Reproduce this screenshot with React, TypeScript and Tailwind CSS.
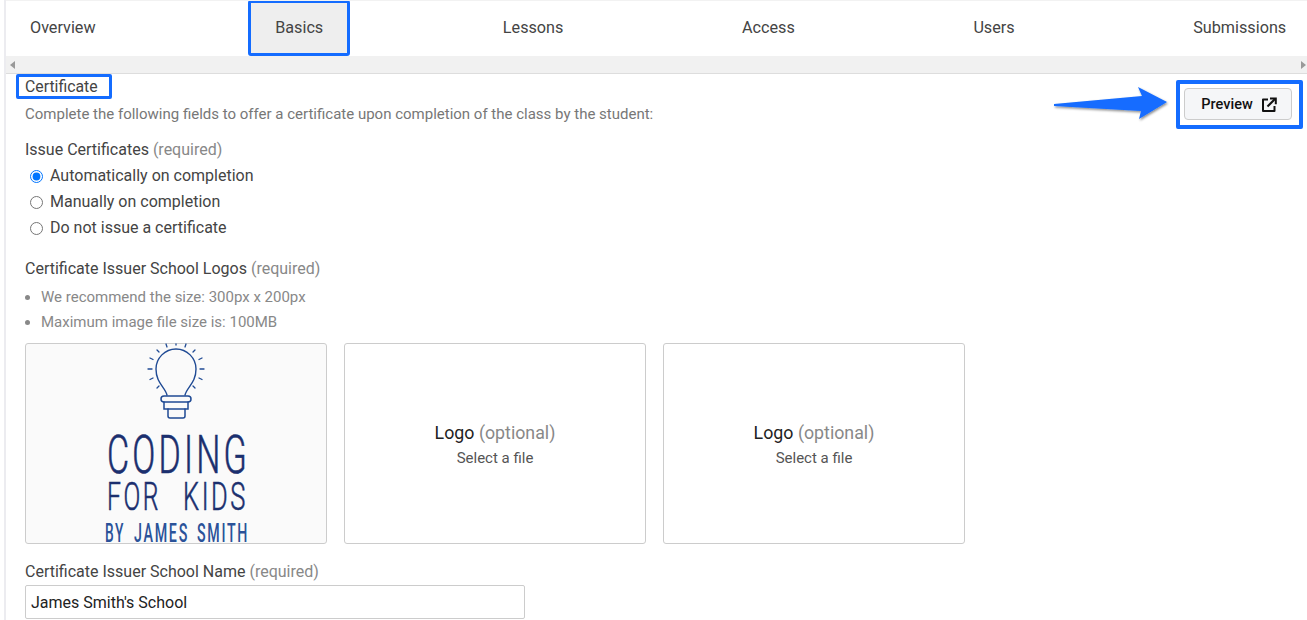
const tabs = ["Overview", "Basics", "Lessons", "Access", "Users", "Submissions"];

const issueOptions = [
  { label: "Automatically on completion", checked: true },
  { label: "Manually on completion", checked: false },
  { label: "Do not issue a certificate", checked: false },
];

const rays = [
  "M150 0 L150 1",
  "M140 0 L141 3",
  "M160 0 L159 3",
  "M131 6 L133 8",
  "M169 6 L167 8",
  "M124 14 L127 15.5",
  "M176 14 L173 15.5",
  "M122 25 L126 25",
  "M178 25 L174 25",
  "M124 35.5 L127 34",
  "M176 35.5 L173 34",
  "M131 44 L133 42",
  "M169 44 L167 42",
];

const LogoArt = () => (
  <svg viewBox="0 0 300 200" className="h-[200px] w-[300px] overflow-visible">
    <g fill="none" stroke="#1f4a94" strokeLinecap="round">
      {rays.map((d) => (
        <path key={d} d={d} strokeWidth="1.3" />
      ))}
      <path
        d="M141 51 C139 43 130 39 130 25 C130 14 139 5 150 5 C161 5 170 14 170 25 C170 39 161 43 159 51"
        strokeWidth="1.4"
      />
      <rect x="135" y="52" width="30" height="6" rx="3" strokeWidth="1.5" />
      <path d="M138 58 L138 65 L162 65 L162 58" strokeWidth="1.5" />
      <path d="M142 65 L142 72 Q142 74 144 74 L157 74 Q159 74 159 72 L159 65" strokeWidth="1.5" />
    </g>
    <g fontFamily="Roboto, sans-serif" fontWeight="300" fill="#1b2f6e" stroke="#1b2f6e" strokeWidth="0.6">
      <text x="81" y="129" fontSize="53" letterSpacing="5" textLength="143" lengthAdjust="spacingAndGlyphs">
        CODING
      </text>
      <text x="81" y="166" fontSize="39" letterSpacing="4" textLength="54" lengthAdjust="spacingAndGlyphs">
        FOR
      </text>
      <text x="157" y="166" fontSize="39" letterSpacing="4" textLength="65" lengthAdjust="spacingAndGlyphs">
        KIDS
      </text>
    </g>
    <g fontFamily="Roboto, sans-serif" fontWeight="500" fontSize="25" letterSpacing="3" fill="#2a5299">
      <text x="79" y="198" textLength="20" lengthAdjust="spacingAndGlyphs">
        BY
      </text>
      <text x="108" y="198" textLength="55" lengthAdjust="spacingAndGlyphs">
        JAMES
      </text>
      <text x="171" y="198" textLength="52" lengthAdjust="spacingAndGlyphs">
        SMITH
      </text>
    </g>
  </svg>
);

const LaunchIcon = () => (
  <svg viewBox="0 0 16 16" className="h-[16px] w-[16px]" fill="none" stroke="#111" strokeWidth="2">
    <path d="M7 2.5 H2 V14 H13.5 V9" strokeLinejoin="round" />
    <path d="M6.5 9.5 L14 2" />
    <path d="M9 1.6 H14.8 V7.2" />
  </svg>
);

const LogoSlot = () => (
  <div className="flex h-[201px] w-[302px] flex-col items-center justify-center rounded-[3px] border border-[#ccc] bg-white pt-[2px]">
    <div className="text-[17.8px] leading-[26px] text-[#222]">
      Logo <span className="text-[#888]">(optional)</span>
    </div>
    <div className="text-[15px] leading-[24px] text-[#555]">Select a file</div>
  </div>
);

const Required = () => <span className="text-[#888]"> (required)</span>;

export default function App() {
  return (
    <div className="h-[620px] w-[1307px] overflow-hidden bg-white font-['Roboto',sans-serif] text-[#444]">
      <div className="ml-[4px] h-full border-l-2 border-[#ececf0]">
        <div className="flex h-[56px] gap-[130.6px] overflow-hidden border-t border-[#f2f2f2]">
          {tabs.map((tab) =>
            tab === "Basics" ? (
              <div
                key={tab}
                className="-ml-[2px] -mt-px mb-px mr-[-2px] flex h-[56px] shrink-0 items-center rounded-[3px] border-[3px] border-[#146cff] bg-[#eee] px-[24px] text-[16.2px] text-[#444]"
              >
                {tab}
              </div>
            ) : (
              <div key={tab} className="flex shrink-0 items-center px-[24px] text-[16.2px] text-[#444]">
                {tab}
              </div>
            ),
          )}
        </div>

        <div className="flex h-[18px] items-center justify-between border-b border-[#ddd] bg-[#f1f1f1] pl-[4px] pr-[1px]">
          <div className="h-0 w-0 border-y-[4px] border-r-[5px] border-y-transparent border-r-[#999]" />
          <div className="h-0 w-0 border-y-[4px] border-l-[5px] border-y-transparent border-l-[#999]" />
        </div>

        <div className="flex justify-between pl-[10px] pr-[4px]">
          <div>
            <div className="inline-block rounded-[2px] border-[3px] border-[#146cff] pl-[6px] pr-[11px] text-[15.8px] leading-[19px] text-[#444]">
              Certificate
            </div>
            <p className="ml-[9px] mt-[3px] text-[15px] leading-[24px] text-[#777]">
              Complete the following fields to offer a certificate upon completion of the class by the student:
            </p>
          </div>

          <div className="relative mt-[6px] h-[49px] rounded-[2px] border-[4px] border-[#146cff] pl-[4px] pr-[7px] pt-[4px]">
            <button className="flex h-[32px] w-[108px] items-center justify-center gap-[8px] rounded-[4px] border border-[#ccc] bg-[#f5f6f8] pl-[2px] pt-[2px] text-[14.5px] font-medium text-[#111]">
              Preview
              <LaunchIcon />
            </button>
            <svg className="absolute left-[-131px] top-[-1px] h-[40px] w-[120px]" viewBox="0 0 120 40">
              <defs>
                <filter id="arrowShadow" x="-10%" y="-20%" width="120%" height="150%">
                  <feDropShadow dx="1" dy="1.5" stdDeviation="1" floodColor="#000" floodOpacity="0.45" />
                </filter>
              </defs>
              <path d="M5 21 L93 13 L89 4 L118 19 L90 36 L92 28 L5 23 Z" fill="#146cff" filter="url(#arrowShadow)" />
            </svg>
          </div>
        </div>

        <div className="pl-[19px]">
          <div className="mt-[9px] text-[16px] leading-[24px] text-[#444]">
            Issue Certificates
            <Required />
          </div>
          <div className="ml-[5px] mt-px flex flex-col">
            {issueOptions.map((option) => (
              <label key={option.label} className="flex h-[26px] items-center gap-[7px] text-[16px] text-[#444]">
                <input
                  type="radio"
                  name="issue"
                  defaultChecked={option.checked}
                  className="m-0 h-[13px] w-[13px] accent-[#0075ff]"
                />
                {option.label}
              </label>
            ))}
          </div>

          <div className="mt-[16px] text-[16px] leading-[24px] text-[#444]">
            Certificate Issuer School Logos
            <Required />
          </div>
          <ul className="mt-[4px] list-disc pl-[16px] text-[15px] leading-[25px] text-[#888]">
            <li>We recommend the size: 300px x 200px</li>
            <li>Maximum image file size is: 100MB</li>
          </ul>

          <div className="mt-[8px] flex gap-[17px]">
            <div className="h-[201px] w-[302px] rounded-[3px] border border-[#ccc] bg-[#fafafa]">
              <LogoArt />
            </div>
            <LogoSlot />
            <LogoSlot />
          </div>

          <div className="mt-[16px] text-[16px] leading-[24px] text-[#444]">
            Certificate Issuer School Name
            <Required />
          </div>
          <input
            readOnly
            value="James Smith's School"
            className="mt-px h-[34px] w-[500px] rounded-[2px] border border-[#ccc] px-[5px] text-[16px] text-[#222] outline-none"
          />
        </div>
      </div>
    </div>
  );
}
